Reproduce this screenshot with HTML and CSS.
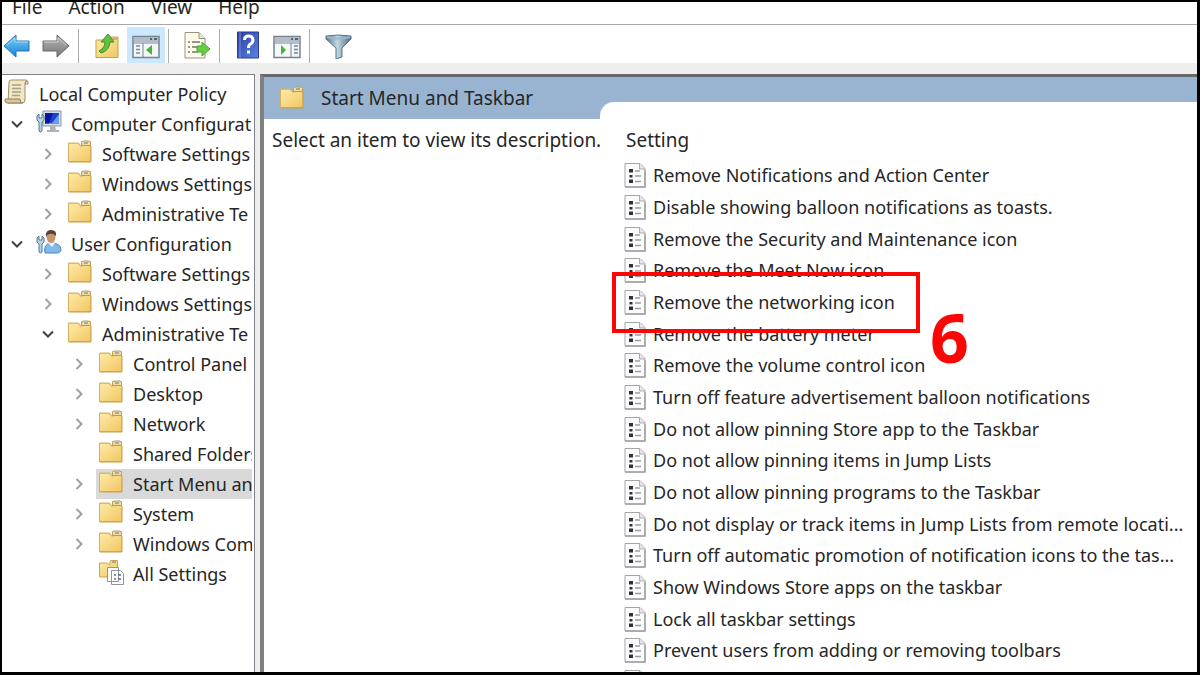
FILE: index.html
```html
<!DOCTYPE html>
<html lang="en">
<head>
    <meta charset="UTF-8">
    <meta name="viewport" content="width=device-width, initial-scale=1">
    <title>Local Group Policy Editor</title>
    <link rel="stylesheet" href="styles.css">
</head>
<body>
    <!-- Shared icons -->
    <svg class="sprite" aria-hidden="true">
        <defs>
            <linearGradient id="folderFill" x1="0" y1="0" x2="1" y2="1">
                <stop offset="0" stop-color="#fdeaa6"/>
                <stop offset="1" stop-color="#f2c765"/>
            </linearGradient>
            <linearGradient id="arrowBlue" x1="0" y1="0" x2="0" y2="1">
                <stop offset="0" stop-color="#7fd0f8"/>
                <stop offset="1" stop-color="#1583d6"/>
            </linearGradient>
            <linearGradient id="arrowGray" x1="0" y1="0" x2="0" y2="1">
                <stop offset="0" stop-color="#b5b5b5"/>
                <stop offset="1" stop-color="#777777"/>
            </linearGradient>
            <linearGradient id="helpFill" x1="0" y1="0" x2="1" y2="1">
                <stop offset="0" stop-color="#2b3f9f"/>
                <stop offset="1" stop-color="#5b84e4"/>
            </linearGradient>
            <linearGradient id="funnelFill" x1="0" y1="0" x2="1" y2="0">
                <stop offset="0" stop-color="#53758c"/>
                <stop offset="0.45" stop-color="#c3d8e4"/>
                <stop offset="1" stop-color="#4d6c80"/>
            </linearGradient>
        </defs>

        <symbol id="folder" viewBox="0 0 26 26">
            <path d="M1.500 4h10l2 2.500h1V2.500h9V22.500H1.500z" fill="#e9c570" stroke="#d3b064"/>
            <path d="M14.500 3.500l1.500-1.500h6l1.500 1.500v3h-9z" fill="#f0dba0" stroke="#b99c5b"/>
            <path d="M17 4h4" stroke="#8e9ca3" stroke-width="1.500"/>
            <path d="M2 5h9l3 3.500 3-1.500h6.500v15H2z" fill="url(#folderFill)"/>
            <path d="M1.500 23h22.500M24 7v16" stroke="#c79f4b" fill="none"/>
        </symbol>

        <symbol id="scroll" viewBox="0 0 26 26">
            <path d="M5 3q0-2 2.500-2H22q2.500 0 2 4h-3v16q0 3-3 3H4z" fill="#f2e6c7" stroke="#9c8d6b"/>
            <path d="M21 5q0-3 2-3M1 20h15q0 4 2.500 4H3q-2.500 0-2-4z" fill="#d9c699" stroke="#8f805d"/>
            <path d="M8 6h9M8 9.500h9M8 13h9M8 16.500h8" stroke="#a99f84" stroke-width="1.500"/>
        </symbol>

        <symbol id="computer" viewBox="0 0 26 26">
            <path d="M7 2h18v15H7z" fill="#d5dde5" stroke="#8897a5"/>
            <path d="M9 4h14v10.500H9z" fill="#1d3fd0"/>
            <path d="M9 4h8l-4 10.500H9z" fill="#0714a4"/>
            <path d="M23 5v9h-7z" fill="#6e9ae9"/>
            <path d="M14 17h5l1 4h3v2H11v-2h3z" fill="#aab4bd"/>
            <path d="M1 7l2-2v4h3V5l2 2v4l-2 2v9q-1.500 2-3 0v-9l-2-2z" fill="#b7d3e4" stroke="#527b98"/>
        </symbol>

        <symbol id="user" viewBox="0 0 26 26">
            <path d="M9 24q-2-9 6-10 10 0 10 7 0 3-5 3z" fill="#81b9e7" stroke="#4b86ba"/>
            <path d="M12 14l4 4 3-4z" fill="#e9f3fb"/>
            <ellipse cx="15" cy="8" rx="4.500" ry="6" fill="#c8946a"/>
            <path d="M10 8q-1-7 5-7t5 6q-3-3-6-2-3 0-4 3z" fill="#5a4132"/>
            <path d="M1 9l2-2v4h3V7l2 2v4l-2 2v8q-1.500 2-3 0v-8l-2-2z" fill="#b7d3e4" stroke="#527b98"/>
        </symbol>

        <symbol id="all-settings" viewBox="0 0 26 26">
            <path d="M1.500 4h8l2 2 1-4.500h7V18h-18z" fill="url(#folderFill)" stroke="#cba553"/>
            <path d="M14 3h4" stroke="#8e9ca3" stroke-width="1.500"/>
            <path d="M9.500 8.500h11v14h-11zM13.500 11.500h9l3 3v11h-12z" fill="#fff" stroke="#8f959c"/>
            <path d="M16 16h2M16 20h2M20 16h3M20 20h3" stroke="#566b8a" stroke-width="1.500"/>
        </symbol>

        <symbol id="policy" viewBox="0 0 22 26">
            <path d="M1 1.500h15l5 5V25H1z" fill="#fcfcfd" stroke="#a5a5a9"/>
            <path d="M15.500 1.500v5.500H21" fill="#e5e5e8" stroke="#adadb1"/>
            <path d="M1 25h20V8" fill="none" stroke="#a0a0a5" stroke-width="1.500"/>
            <path d="M5 7h4v3.500H5zM5.500 13h3v2.500h-3zM5 17.500h4V21H5z" fill="#303039"/>
            <path d="M11 9h5M11 14h6M11 19.500h6" stroke="#9c9ca6" stroke-width="1.500"/>
        </symbol>

        <symbol id="expanded" viewBox="0 0 14 14">
            <path d="M2 4.500l5 5 5-5" fill="none" stroke="#404040" stroke-width="2"/>
        </symbol>
        <symbol id="collapsed" viewBox="0 0 14 14">
            <path d="M4.500 2l5 5-5 5" fill="none" stroke="#a0a0a0" stroke-width="2"/>
        </symbol>
    </svg>

    <div class="window">
        <nav class="menu-bar">
            <button class="menu">File</button>
            <button class="menu">Action</button>
            <button class="menu">View</button>
            <button class="menu">Help</button>
        </nav>

        <div class="toolbar">
            <button class="tool" aria-label="Back">
                <svg viewBox="0 0 28 28"><path d="M1 15L13 4v6h13v10H13v6z" fill="url(#arrowBlue)" stroke="#2277b5"/><path d="M4 14l8-7v4h13" fill="none" stroke="#a5def8"/></svg>
            </button>
            <button class="tool" aria-label="Forward">
                <svg viewBox="0 0 28 28"><path d="M27 15L15 4v6H1v10h14v6z" fill="url(#arrowGray)" stroke="#696969"/><path d="M2 11h14V7l8 7" fill="none" stroke="#cfcfcf"/></svg>
            </button>
            <span class="separator"></span>
            <button class="tool" aria-label="Up one level">
                <svg viewBox="0 0 28 28"><path d="M3 9h12l2-3h8v20.500H3z" fill="url(#folderFill)" stroke="#c99f42"/><path d="M18 8h6" stroke="#9a8550"/><path d="M6 20q6-3 6-9H8l7-8 6 8h-4q-1 9-9 11z" fill="#5fc23a" stroke="#39912b"/></svg>
            </button>
            <button class="tool active" aria-label="Show or hide console tree">
                <svg viewBox="0 0 28 28"><path d="M1 5.500h26v21H1z" fill="#f4f6f8" stroke="#74828e" stroke-width="1.500"/><path d="M2 6h24v5H2z" fill="#b1bdc8"/><path d="M1 12h26M11 12v14" stroke="#788591"/><path d="M18 8h2M22 8h3" stroke="#526575" stroke-width="2"/><path d="M4 15h4M4 18.500h4M4 22h4" stroke="#788ba0" stroke-width="1.500"/><path d="M20 14v10l-6-5z" fill="#45b43a"/></svg>
            </button>
            <span class="separator"></span>
            <button class="tool" aria-label="Export list">
                <svg viewBox="0 0 28 28"><path d="M2 1.500h14l6 6V27H2z" fill="#fffbea" stroke="#999581"/><path d="M16 1.500v6h6" fill="#e8e4d2" stroke="#999581"/><path d="M5 11h2M5 16h2M5 21h2M9 11h8M9 16h6M9 21h6" stroke="#77746c" stroke-width="1.500"/><path d="M14 15h5v-4l8 7-8 7v-4h-5z" fill="#65cf43" stroke="#4aa935"/></svg>
            </button>
            <span class="separator"></span>
            <button class="tool" aria-label="Help">
                <svg viewBox="0 0 28 28"><path d="M3.500 1h21v26h-21z" fill="url(#helpFill)" stroke="#263c91"/><path d="M6 1v26" stroke="#7891d8"/><path d="M10.500 9q0-4 4-4t4.500 4q0 2.500-2.500 4-2 1-2 4" fill="none" stroke="#fff" stroke-width="3"/><path d="M13 19.500h3v3h-3z" fill="#fff"/></svg>
            </button>
            <button class="tool" aria-label="Show or hide action pane">
                <svg viewBox="0 0 28 28"><path d="M1 5.500h26v21H1z" fill="#f4f6f8" stroke="#74828e" stroke-width="1.500"/><path d="M2 6h24v5H2z" fill="#b1bdc8"/><path d="M1 12h26M18 12v14" stroke="#788591"/><path d="M18 8h2M22 8h3" stroke="#526575" stroke-width="2"/><path d="M21 15h4M21 18.500h4M21 22h4" stroke="#6785ac" stroke-width="1.500"/><path d="M8 14v10l5-5z" fill="#45b43a"/></svg>
            </button>
            <span class="separator"></span>
            <button class="tool" aria-label="Filter">
                <svg viewBox="0 0 28 28"><path d="M2 5q12-2 25 0v3l-9 9v9l-6 2V17L2 8z" fill="url(#funnelFill)" stroke="#577487"/><path d="M3 6q11 3 23 0" fill="none" stroke="#9cb7c7" stroke-width="2"/></svg>
            </button>
        </div>

        <div class="panes">
            <aside class="tree-pane">
                <div class="label root"><svg class="icon"><use href="#scroll"/></svg>Local Computer Policy</div>
                <ul class="tree">
                    <li>
                        <div class="node"><button class="toggle" aria-label="Collapse"><svg><use href="#expanded"/></svg></button><span class="label"><svg class="icon"><use href="#computer"/></svg>Computer Configuration</span></div>
                        <ul>
                            <li class="node"><button class="toggle" aria-label="Expand"><svg><use href="#collapsed"/></svg></button><span class="label"><svg class="icon"><use href="#folder"/></svg>Software Settings</span></li>
                            <li class="node"><button class="toggle" aria-label="Expand"><svg><use href="#collapsed"/></svg></button><span class="label"><svg class="icon"><use href="#folder"/></svg>Windows Settings</span></li>
                            <li class="node"><button class="toggle" aria-label="Expand"><svg><use href="#collapsed"/></svg></button><span class="label"><svg class="icon"><use href="#folder"/></svg>Administrative Te</span></li>
                        </ul>
                    </li>
                    <li>
                        <div class="node"><button class="toggle" aria-label="Collapse"><svg><use href="#expanded"/></svg></button><span class="label"><svg class="icon"><use href="#user"/></svg>User Configuration</span></div>
                        <ul>
                            <li class="node"><button class="toggle" aria-label="Expand"><svg><use href="#collapsed"/></svg></button><span class="label"><svg class="icon"><use href="#folder"/></svg>Software Settings</span></li>
                            <li class="node"><button class="toggle" aria-label="Expand"><svg><use href="#collapsed"/></svg></button><span class="label"><svg class="icon"><use href="#folder"/></svg>Windows Settings</span></li>
                            <li>
                                <div class="node"><button class="toggle" aria-label="Collapse"><svg><use href="#expanded"/></svg></button><span class="label"><svg class="icon"><use href="#folder"/></svg>Administrative Te</span></div>
                                <ul>
                                    <li class="node"><button class="toggle" aria-label="Expand"><svg><use href="#collapsed"/></svg></button><span class="label"><svg class="icon"><use href="#folder"/></svg>Control Panel</span></li>
                                    <li class="node"><button class="toggle" aria-label="Expand"><svg><use href="#collapsed"/></svg></button><span class="label"><svg class="icon"><use href="#folder"/></svg>Desktop</span></li>
                                    <li class="node"><button class="toggle" aria-label="Expand"><svg><use href="#collapsed"/></svg></button><span class="label"><svg class="icon"><use href="#folder"/></svg>Network</span></li>
                                    <li class="node leaf"><span class="label"><svg class="icon"><use href="#folder"/></svg>Shared Folders</span></li>
                                    <li class="node"><button class="toggle" aria-label="Expand"><svg><use href="#collapsed"/></svg></button><span class="label selected"><svg class="icon"><use href="#folder"/></svg>Start Menu and Taskbar</span></li>
                                    <li class="node"><button class="toggle" aria-label="Expand"><svg><use href="#collapsed"/></svg></button><span class="label"><svg class="icon"><use href="#folder"/></svg>System</span></li>
                                    <li class="node"><button class="toggle" aria-label="Expand"><svg><use href="#collapsed"/></svg></button><span class="label"><svg class="icon"><use href="#folder"/></svg>Windows Components</span></li>
                                    <li class="node leaf"><span class="label"><svg class="icon"><use href="#all-settings"/></svg>All Settings</span></li>
                                </ul>
                            </li>
                        </ul>
                    </li>
                </ul>
            </aside>

            <main class="detail-pane">
                <header class="detail-header">
                    <h1 class="detail-title"><svg class="icon"><use href="#folder"/></svg>Start Menu and Taskbar</h1>
                    <div class="tab-edge"></div>
                </header>
                <div class="detail-body">
                    <p class="description">Select an item to view its description.</p>
                    <section class="settings">
                        <h2 class="column-title">Setting</h2>
                        <ul class="setting-list">
                            <li class="setting"><svg class="policy-icon"><use href="#policy"/></svg>Remove Notifications and Action Center</li>
                            <li class="setting"><svg class="policy-icon"><use href="#policy"/></svg>Disable showing balloon notifications as toasts.</li>
                            <li class="setting"><svg class="policy-icon"><use href="#policy"/></svg>Remove the Security and Maintenance icon</li>
                            <li class="setting"><svg class="policy-icon"><use href="#policy"/></svg>Remove the Meet Now icon</li>
                            <li class="setting marked"><svg class="policy-icon"><use href="#policy"/></svg>Remove the networking icon<span class="marker"></span><strong class="step">6</strong></li>
                            <li class="setting"><svg class="policy-icon"><use href="#policy"/></svg>Remove the battery meter</li>
                            <li class="setting"><svg class="policy-icon"><use href="#policy"/></svg>Remove the volume control icon</li>
                            <li class="setting"><svg class="policy-icon"><use href="#policy"/></svg>Turn off feature advertisement balloon notifications</li>
                            <li class="setting"><svg class="policy-icon"><use href="#policy"/></svg>Do not allow pinning Store app to the Taskbar</li>
                            <li class="setting"><svg class="policy-icon"><use href="#policy"/></svg>Do not allow pinning items in Jump Lists</li>
                            <li class="setting"><svg class="policy-icon"><use href="#policy"/></svg>Do not allow pinning programs to the Taskbar</li>
                            <li class="setting"><svg class="policy-icon"><use href="#policy"/></svg>Do not display or track items in Jump Lists from remote locati...</li>
                            <li class="setting"><svg class="policy-icon"><use href="#policy"/></svg>Turn off automatic promotion of notification icons to the tas...</li>
                            <li class="setting"><svg class="policy-icon"><use href="#policy"/></svg>Show Windows Store apps on the taskbar</li>
                            <li class="setting"><svg class="policy-icon"><use href="#policy"/></svg>Lock all taskbar settings</li>
                            <li class="setting"><svg class="policy-icon"><use href="#policy"/></svg>Prevent users from adding or removing toolbars</li>
                            <li class="setting"><svg class="policy-icon"><use href="#policy"/></svg></li>
                        </ul>
                    </section>
                </div>
            </main>
        </div>
    </div>
</body>
</html>
```

FILE: styles.css
```css
* {
    box-sizing: border-box;
}

body {
    margin: 0;
    font-family: 'Noto Sans', 'Open Sans', sans-serif;
    font-size: 19px;
    line-height: 30px;
    color: #262626;
}

ul, h1, h2, p {
    margin: 0;
    padding: 0;
    font-size: inherit;
    font-weight: normal;
    list-style: none;
}

button {
    padding: 0;
    border: none;
    background: none;
    font: inherit;
    color: inherit;
}

.sprite {
    position: absolute;
    width: 0;
    height: 0;
}

.window {
    display: flex;
    flex-direction: column;
    height: 100vh;
    border: 2px solid #000;
    border-right-width: 3px;
    border-bottom-width: 3px;
    background: #fff;
    overflow: hidden;
}

/* Menu and toolbar */
.menu-bar {
    display: flex;
    flex: none;
    align-items: flex-start;
    gap: 26px;
    height: 23px;
    padding-left: 10px;
    border-bottom: 1px solid #a8a8a8;
    overflow: hidden;
}

.menu {
    line-height: 10px;
}

.toolbar {
    display: flex;
    flex: none;
    gap: 1px;
    height: 38px;
    margin-left: -4px;
    padding-top: 2px;
}

.tool {
    display: flex;
    align-items: center;
    justify-content: center;
    width: 38px;
}

.tool svg {
    width: 28px;
    height: 28px;
}

.tool.active {
    background: #cce8ff;
}

.separator {
    width: 1px;
    margin: 2px 8px 0 2px;
    background: #adadad;
}

/* Console tree */
.panes {
    display: flex;
    flex: 1;
    min-height: 0;
    padding-top: 11px;
    background: #eeeeef;
}

.tree-pane {
    flex: none;
    width: 253px;
    padding: 4px 2px 0 0;
    border-top: 1px solid #7f8288;
    border-right: 1px solid #7f8288;
    background: #fff;
    font-size: 18px;
    overflow: hidden;
}

.tree-pane .label {
    overflow: hidden;
}

.tree ul {
    margin-left: 31px;
}

.node {
    display: flex;
    height: 30px;
}

.leaf {
    padding-left: 32px;
}

.toggle {
    display: flex;
    flex: none;
    align-items: center;
    justify-content: center;
    width: 30px;
    margin-right: 2px;
}

.toggle svg {
    width: 14px;
    height: 14px;
}

.label {
    display: flex;
    flex: 1;
    gap: 9px;
    padding-left: 2px;
    white-space: nowrap;
}

.selected {
    background: #d9d9d9;
}

.icon {
    flex: none;
    width: 26px;
    height: 26px;
}

/* Details */
.detail-pane {
    display: flex;
    flex: 1;
    flex-direction: column;
    min-width: 0;
    margin-left: 5px;
    border-top: 3px solid #65686c;
    border-left: 4px solid #808080;
    background: #fff;
}

.detail-header {
    display: flex;
    flex: none;
    align-items: flex-end;
    height: 42px;
    background: #99b4d1;
}

.detail-title {
    display: flex;
    align-items: center;
    gap: 16px;
    width: 336px;
    height: 42px;
    padding-left: 15px;
}

.tab-edge {
    flex: 1;
    height: 17px;
    border-top-left-radius: 14px;
    background: #fff;
}

.detail-body {
    display: flex;
    flex: 1;
    min-height: 0;
    padding-top: 6px;
    overflow: hidden;
}

.description {
    flex: none;
    width: 360px;
    padding-left: 8px;
}

.settings {
    flex: 1;
    min-width: 0;
}

.column-title {
    padding-left: 2px;
}

.setting-list {
    padding-top: 4px;
    font-size: 18px;
}

.setting {
    display: flex;
    align-items: center;
    gap: 7px;
    height: 32px;
    white-space: nowrap;
}

.setting:nth-child(3n) {
    height: 31px;
}

.policy-icon {
    flex: none;
    width: 22px;
    height: 26px;
}

/* Step callout */
.marked {
    position: relative;
}

.marker {
    position: absolute;
    top: -14px;
    left: -12px;
    width: 308px;
    height: 61px;
    border: 4px solid #fb0505;
}

.step {
    position: absolute;
    top: 15px;
    left: 306px;
    font-family: 'Open Sans', 'Noto Sans', sans-serif;
    font-size: 68px;
    line-height: 72px;
    color: #fb0505;
}
```
